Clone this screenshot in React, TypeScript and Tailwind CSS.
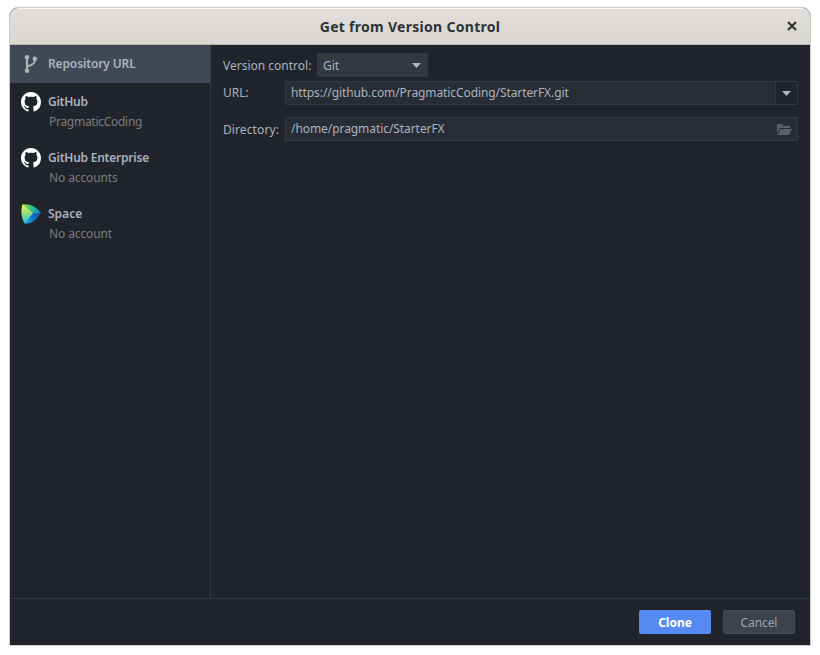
import React from "react";

function BranchIcon() {
  return (
    <svg width="20" height="20" viewBox="0 0 20 20" fill="none">
      <path d="M6 3.5V16.5M14 5.5C14 9.8 11.5 11.2 6.5 12.2" stroke="#b0b3b6" strokeWidth="2.1" />
      <circle cx="6" cy="3.2" r="2.3" fill="#b0b3b6" />
      <circle cx="6" cy="16.8" r="2.3" fill="#b0b3b6" />
      <circle cx="13.8" cy="4.8" r="2.3" fill="#b0b3b6" />
    </svg>
  );
}

function GitHubIcon() {
  return (
    <svg width="20" height="20" viewBox="0 0 16 16" fill="#ffffff">
      <path d="M8 0C3.58 0 0 3.58 0 8c0 3.54 2.29 6.53 5.47 7.59.4.07.55-.17.55-.38 0-.19-.01-.82-.01-1.49-2.01.37-2.53-.49-2.69-.94-.09-.23-.48-.94-.82-1.13-.28-.15-.68-.52-.01-.53.63-.01 1.08.58 1.23.82.72 1.21 1.87.87 2.33.66.07-.52.28-.87.51-1.07-1.78-.2-3.64-.89-3.64-3.95 0-.87.31-1.59.82-2.15-.08-.2-.36-1.02.08-2.12 0 0 .67-.21 2.2.82.64-.18 1.32-.27 2-.27s1.36.09 2 .27c1.53-1.04 2.2-.82 2.2-.82.44 1.1.16 1.92.08 2.12.51.56.82 1.27.82 2.15 0 3.07-1.87 3.75-3.65 3.95.29.25.54.73.54 1.48 0 1.07-.01 1.93-.01 2.2 0 .21.15.46.55.38A8.01 8.01 0 0 0 16 8c0-4.42-3.58-8-8-8Z" />
    </svg>
  );
}

function SpaceIcon() {
  return (
    <svg width="20" height="20" viewBox="0 0 20 20">
      <defs>
        <linearGradient id="front" x1="4" y1="0" x2="6" y2="20" gradientUnits="userSpaceOnUse">
          <stop offset="0" stopColor="#fcf84a" />
          <stop offset="0.5" stopColor="#8ddc86" />
          <stop offset="1" stopColor="#12c4ee" />
        </linearGradient>
        <linearGradient id="top" x1="3" y1="2" x2="20" y2="9" gradientUnits="userSpaceOnUse">
          <stop offset="0" stopColor="#8be04d" />
          <stop offset="0.45" stopColor="#27c48c" />
          <stop offset="1" stopColor="#1687d0" />
        </linearGradient>
        <linearGradient id="bottom" x1="5" y1="18" x2="19" y2="9" gradientUnits="userSpaceOnUse">
          <stop offset="0" stopColor="#10b2ee" />
          <stop offset="0.5" stopColor="#0b73d1" />
          <stop offset="1" stopColor="#2450a4" />
        </linearGradient>
      </defs>
      <path d="M1.6 0.3C9 -0.6 15 2.5 20 9L12 9.5Z" fill="url(#top)" />
      <path d="M20 9C16 15.5 11 19.3 4 20L12 9Z" fill="url(#bottom)" />
      <path d="M1.6 0.3L12 9L4 20C0.2 15 -0.6 6 1.6 0.3Z" fill="url(#front)" />
    </svg>
  );
}

function FolderIcon() {
  return (
    <svg width="15" height="11" viewBox="0 0 15 11" fill="#596168">
      <path d="M0 0H5L6.3 2H13V4H3L0 9.5Z" />
      <path d="M3.6 5H15L12 11H0.5Z" />
    </svg>
  );
}

function Caret() {
  return (
    <svg width="9" height="5" viewBox="0 0 9 5" fill="#afb6c2">
      <path d="M0 0H9L4.5 5Z" />
    </svg>
  );
}

interface AccountProps {
  icon: React.ReactNode;
  name: string;
  nameClass: string;
  detail: string;
  detailClass: string;
}

function Account({ icon, name, nameClass, detail, detailClass }: AccountProps) {
  return (
    <li className="flex h-14 gap-[7px] pl-[11px] pt-[9px]">
      {icon}
      <div className="leading-5">
        <div className={`h-5 font-semibold text-[#abb2bf] ${nameClass}`}>{name}</div>
        <div className={`h-5 pl-px text-[#7c7d7b] ${detailClass}`}>{detail}</div>
      </div>
    </li>
  );
}

export default function App() {
  return (
    <div className="h-[655px] w-[820px] overflow-hidden bg-white pl-[9px] pt-[7px] font-['Noto_Sans','Open_Sans',sans-serif] text-[12px] whitespace-nowrap">
      <div className="flex h-[639px] w-[802px] flex-col overflow-hidden rounded-t-[9px] border border-[#cccccc] bg-[#21242b]">
        <header className="flex h-[37px] shrink-0 items-center border-t border-b border-t-[#f5f4f3] border-b-[#bdb6ab] bg-linear-to-b from-[#e1dedb] to-[#dad7d2] pr-[13px]">
          <h1 className="flex-1 pl-[23px] text-center text-[14px] font-bold tracking-[0.29px] text-[#2d3436]">Get from Version Control</h1>
          <svg width="10" height="10" viewBox="0 0 10 10" fill="none" stroke="#2d3436" strokeWidth="2.2" className="relative -top-px">
            <path d="M1 1L9 9M9 1L1 9" />
          </svg>
        </header>

        <div className="flex min-h-0 flex-1">
          <aside className="w-[201px] shrink-0 border-r border-[#333841]">
            <div className="flex h-[38px] items-center gap-[7px] bg-[#414855] pl-[11px] font-semibold text-[#abb2bf]">
              <BranchIcon />
              <span className="tracking-[-0.13px]">Repository URL</span>
            </div>
            <ul>
              <Account icon={<GitHubIcon />} name="GitHub" nameClass="tracking-[-0.25px]" detail="PragmaticCoding" detailClass="tracking-[-0.28px]" />
              <Account icon={<GitHubIcon />} name="GitHub Enterprise" nameClass="tracking-[-0.23px]" detail="No accounts" detailClass="tracking-[-0.12px]" />
              <Account icon={<SpaceIcon />} name="Space" nameClass="" detail="No account" detailClass="tracking-[-0.12px]" />
            </ul>
          </aside>

          <main className="flex-1 pl-3 pr-3 pt-2 text-[#abb2bf]">
            <div className="flex h-6 items-center">
              <span className="w-[94px] pt-0.5">Version control:</span>
              <div className="flex h-6 w-[111px] items-center justify-between rounded-[2px] bg-[#333841] pl-1.5 pr-[7px]">
                <span className="pt-0.5">Git</span>
                <Caret />
              </div>
            </div>
            <div className="mt-1 flex h-6">
              <span className="w-[62px] leading-[23px]">URL:</span>
              <div className="flex flex-1 rounded-[2px] border border-[#333841] bg-[#282c34]">
                <span className="flex-1 pl-[5px] leading-[22px] tracking-[-0.09px]">https://github.com/PragmaticCoding/StarterFX.git</span>
                <div className="flex w-[22px] items-center justify-center border-l border-[#333841] bg-[#21242b]">
                  <Caret />
                </div>
              </div>
            </div>
            <div className="mt-3 flex h-6">
              <span className="w-[62px] pt-px leading-6 tracking-[0.1px]">Directory:</span>
              <div className="flex flex-1 items-center justify-between border border-[#333841] bg-[#282c34] pl-[5px] pr-[5px]">
                <span className="tracking-[-0.07px]">/home/pragmatic/StarterFX</span>
                <FolderIcon />
              </div>
            </div>
          </main>
        </div>

        <footer className="flex h-[47px] shrink-0 items-start justify-end gap-3 border-t border-[#333841] pr-[15px] pt-[11px]">
          <button className="h-6 w-[72px] rounded-[2px] bg-[#568af2] pt-0.5 font-bold text-white">Clone</button>
          <button className="h-6 w-[72px] rounded-[2px] border border-[#464d59] bg-[#3d424b] pt-0.5 tracking-[-0.1px] text-[#9da2ab]">Cancel</button>
        </footer>
      </div>
    </div>
  );
}
